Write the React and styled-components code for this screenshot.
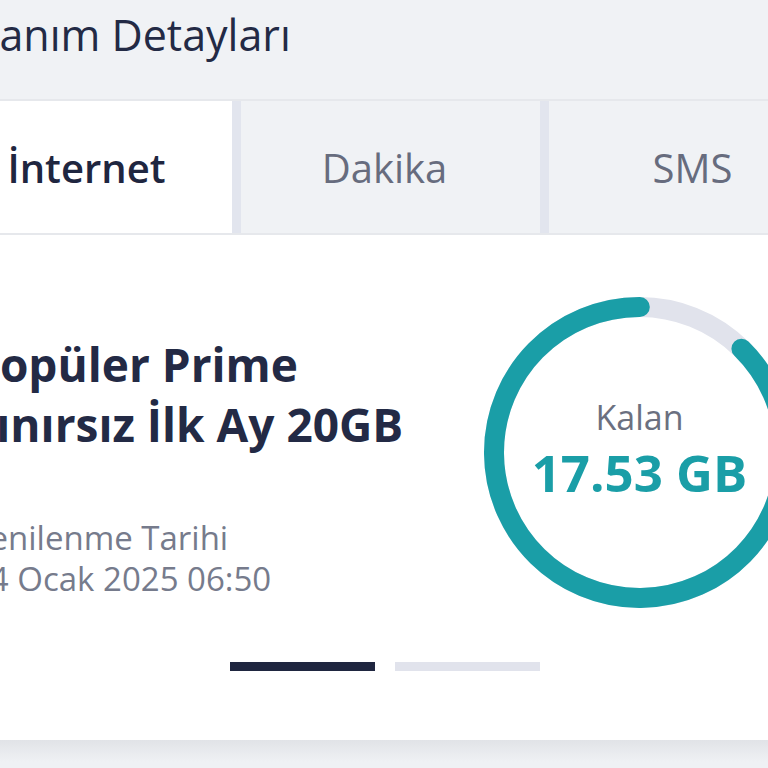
import styled, { createGlobalStyle } from "styled-components";

const GlobalStyle = createGlobalStyle`
  html, body {
    margin: 0;
    padding: 0;
    background: #f0f2f5;
    overflow: hidden;
  }

  body {
    font-family: "Open Sans", "Noto Sans", sans-serif;
    color: #232a45;
  }
`;

const TABS = ["İnternet", "Dakika", "SMS"];

const USAGE = { remaining: 17.53, total: 20, unit: "GB" };

export default function App() {
  return (
    <>
      <GlobalStyle />
      <Screen>
        <Header>
          <Title>Kullanım Detayları</Title>
        </Header>

        <TabBar>
          {TABS.map((tab, i) => (
            <Tab key={tab} $active={i === 0}>
              {tab}
            </Tab>
          ))}
        </TabBar>

        <Card>
          <CardRow>
            <Info>
              <PackageName>
                Popüler Prime
                <br />
                Sınırsız İlk Ay 20GB
              </PackageName>
              <Renewal>
                <span>Yenilenme Tarihi</span>
                <span>24 Ocak 2025 06:50</span>
              </Renewal>
            </Info>

            <Gauge value={USAGE.remaining} max={USAGE.total} unit={USAGE.unit} />
          </CardRow>

          <Pager>
            <PagerBar $active />
            <PagerBar />
          </Pager>
        </Card>

        <Footer />
      </Screen>
    </>
  );
}

function Gauge({ value, max, unit }) {
  const size = 311;
  const stroke = 20;
  const r = (size - stroke) / 2;
  const c = 2 * Math.PI * r;
  const ratio = value / max;
  // the used part sits right after 12 o'clock, the rest runs round to the top
  const startDeg = -90 + (1 - ratio) * 360;

  return (
    <GaugeWrap>
      <svg width={size} height={size} viewBox={`0 0 ${size} ${size}`}>
        <circle
          cx={size / 2}
          cy={size / 2}
          r={r}
          fill="none"
          stroke="#e1e3ec"
          strokeWidth={stroke}
        />
        <circle
          cx={size / 2}
          cy={size / 2}
          r={r}
          fill="none"
          stroke="#1a9ea7"
          strokeWidth={stroke}
          strokeLinecap="round"
          strokeDasharray={`${c * ratio} ${c}`}
          transform={`rotate(${startDeg} ${size / 2} ${size / 2})`}
        />
      </svg>
      <GaugeText>
        <GaugeLabel>Kalan</GaugeLabel>
        <GaugeValue>
          {value} {unit}
        </GaugeValue>
      </GaugeText>
    </GaugeWrap>
  );
}

const Screen = styled.div`
  margin-left: -67px;
  width: 915px;
  display: flex;
  flex-direction: column;
`;

const Header = styled.header`
  height: 99px;
  box-sizing: border-box;
`;

const Title = styled.h1`
  margin: 9px 0 0 -8px;
  font-size: 43px;
  line-height: 52px;
  font-weight: 500;
  color: #232a45;
  white-space: nowrap;
`;

const TabBar = styled.nav`
  display: grid;
  grid-template-columns: repeat(3, 299px);
  gap: 9px;
  height: 132px;
  background: #e2e5ee;
  border-top: 2px solid #e6e8ec;
  border-bottom: 2px solid #e6e8ec;
`;

const Tab = styled.div`
  display: flex;
  align-items: center;
  justify-content: center;
  padding: ${(p) => (p.$active ? "0 0 0 8px" : "0 12px 0 0")};
  background: ${(p) => (p.$active ? "#ffffff" : "#f0f2f5")};
  color: ${(p) => (p.$active ? "#1f2640" : "#676c7e")};
  font-size: 40px;
  font-weight: ${(p) => (p.$active ? 600 : 400)};
  white-space: nowrap;
`;

const Card = styled.section`
  background: #ffffff;
  padding: 62px 0 69px;
  display: flex;
  flex-direction: column;
`;

const CardRow = styled.div`
  display: flex;
  align-items: flex-start;
  height: 311px;
  padding-left: 38px;
  padding-right: 53px;
`;

const Info = styled.div`
  margin-top: 37px;
  display: flex;
  flex-direction: column;
  gap: 63px;
  white-space: nowrap;
`;

const PackageName = styled.h2`
  margin: 0;
  font-size: 46px;
  line-height: 60px;
  font-weight: 700;
  color: #232a45;
`;

const Renewal = styled.p`
  margin: 0;
  display: flex;
  flex-direction: column;
  font-size: 33px;
  line-height: 41px;
  color: #767b8c;
`;

const GaugeWrap = styled.div`
  margin-left: auto;
  display: grid;
  width: 311px;
  height: 311px;

  svg,
  > div {
    grid-area: 1 / 1;
  }
`;

const GaugeText = styled.div`
  display: flex;
  flex-direction: column;
  align-items: center;
  justify-content: center;
  gap: 7px;
  padding-bottom: 8px;
`;

const GaugeLabel = styled.span`
  font-size: 34px;
  line-height: 40px;
  color: #6b7080;
`;

const GaugeValue = styled.span`
  font-size: 51px;
  line-height: 56px;
  font-weight: 700;
  color: #1a9ea7;
`;

const Pager = styled.div`
  display: flex;
  justify-content: center;
  gap: 20px;
  margin-top: 54px;
  padding-right: 12px;
`;

const PagerBar = styled.span`
  width: 145px;
  height: 9px;
  background: ${(p) => (p.$active ? "#1f2640" : "#e1e3ec")};
`;

const Footer = styled.div`
  height: 60px;
  background: linear-gradient(#e1e3e7, #eff1f4 22px);
`;
